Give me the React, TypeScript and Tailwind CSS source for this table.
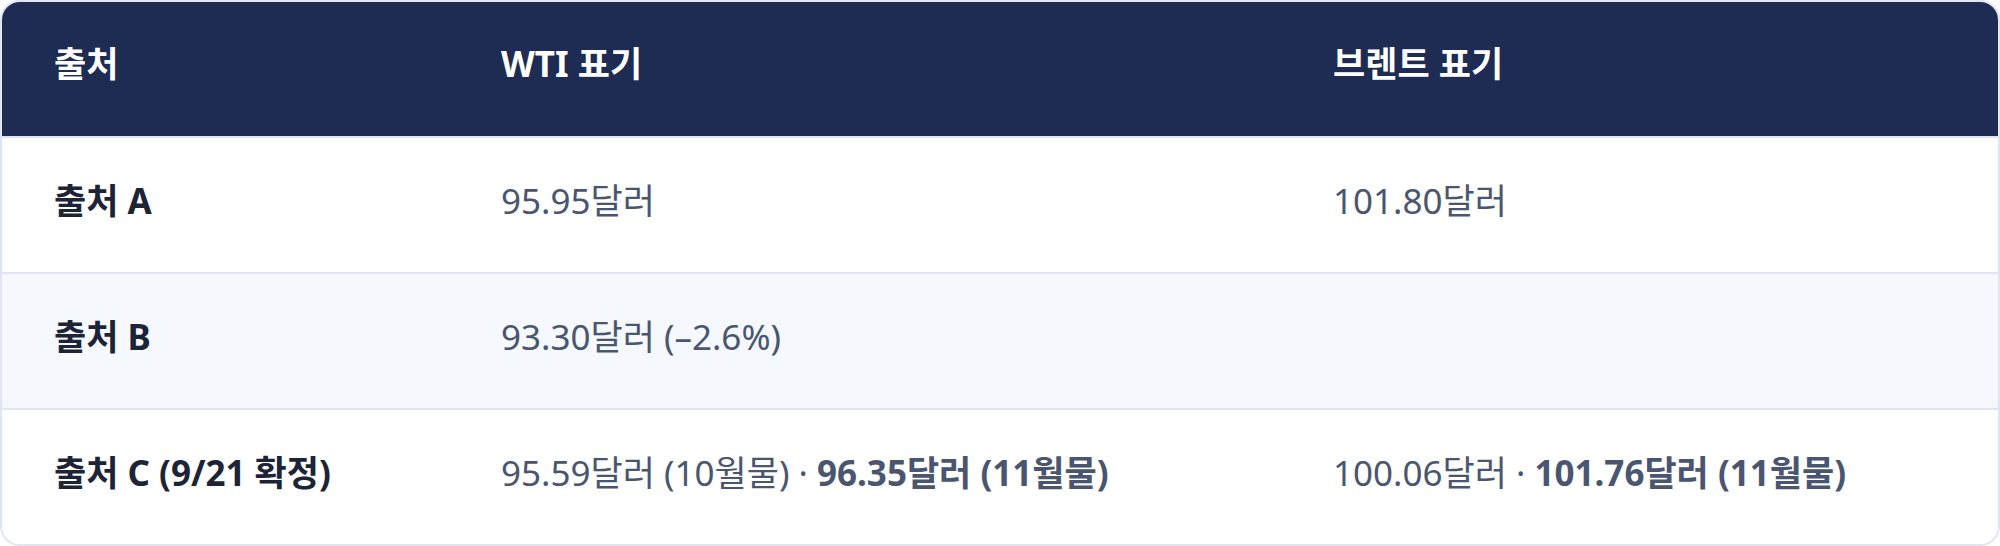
import React from 'react';

type Row = {
  source: string;
  wti: React.ReactNode;
  brent: React.ReactNode;
};

const rows: Row[] = [
  { source: '출처 A', wti: '95.95달러', brent: '101.80달러' },
  { source: '출처 B', wti: '93.30달러 (–2.6%)', brent: '' },
  {
    source: '출처 C (9/21 확정)',
    wti: (
      <>
        95.59달러 (10월물) · <span className="font-bold">96.35달러 (11월물)</span>
      </>
    ),
    brent: (
      <>
        100.06달러 · <span className="font-bold">101.76달러 (11월물)</span>
      </>
    ),
  },
];

const cols = 'grid grid-cols-[447px_832px_1fr]';

const App: React.FC = () => {
  return (
    <div
      className="w-[2000px] h-[546px] bg-white"
      style={{ fontFamily: '"Noto Sans", "Noto Sans CJK KR", sans-serif' }}
    >
      <div className="h-full overflow-hidden rounded-[20px] border-2 border-[#dfe6f1] bg-white">
        <div className={`${cols} h-[134px] items-center pb-[10px] bg-[#1e2b53] text-[35px] font-bold text-white`}>
          <div className="pl-[52px]">출처</div>
          <div className="pl-[52px]">WTI 표기</div>
          <div className="pl-[52px]">브렌트 표기</div>
        </div>

        {rows.map((row, i) => (
          <div
            key={row.source}
            className={`${cols} h-[136px] items-center pb-[8px] border-t-2 border-[#dfe6f1] text-[35px] ${
              i % 2 === 1 ? 'bg-[#f5f8fd]' : 'bg-white'
            }`}
          >
            <div className="pl-[52px] font-bold text-[#1c2435]">{row.source}</div>
            <div className="pl-[52px] text-[#4a5670]">{row.wti}</div>
            <div className="pl-[52px] text-[#4a5670]">{row.brent}</div>
          </div>
        ))}
      </div>
    </div>
  );
};

export default App;
